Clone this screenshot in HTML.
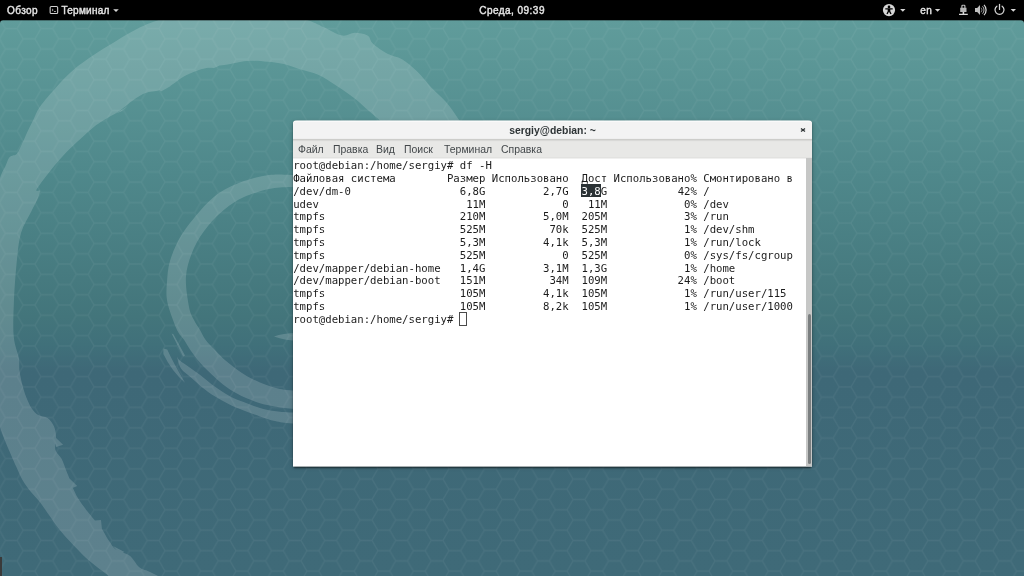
<!DOCTYPE html>
<html lang="ru">
<head>
<meta charset="utf-8">
<title>sergiy@debian: ~</title>
<style>
html,body{margin:0;padding:0;}
body{width:1024px;height:576px;overflow:hidden;position:relative;background:#3f6a79;font-family:"Liberation Sans","DejaVu Sans",sans-serif;}
#bg{position:absolute;left:0;top:0;width:1024px;height:576px;}
#panel{position:absolute;left:0;top:0;width:1024px;height:20px;background:#000;color:#e4e4e4;font-weight:normal;font-size:10px;-webkit-text-stroke:0.42px #e4e4e4;}
#panel span{filter:blur(0.25px);position:absolute;top:0;line-height:22px;white-space:pre;}
#picons{position:absolute;left:0;top:0;width:1024px;height:20px;}
#win{position:absolute;left:293px;top:121px;width:519px;height:345px;background:#fff;border-radius:3px 3px 0 0;box-shadow:0 1px 4px rgba(0,0,0,.3),0 3px 2px -1px rgba(0,0,0,.5),0 0 0 0.5px rgba(0,0,0,.08);}
#win::after{content:"";position:absolute;left:0;top:100%;width:100%;height:1px;background:rgba(255,255,255,.62);}
#chrome{position:absolute;left:0;top:-1px;width:100%;height:39px;border-radius:4px 4px 0 0;background:linear-gradient(to bottom,rgba(255,255,255,.55) 0,rgba(255,255,255,.55) 1px,#fafafa 1px,#fafafa 2px,#f3f3f3 2px,#f3f3f3 18px,#efefef 18px,#efefef 19px,#cdcdca 19px,#cdcdca 20px,#d9d9d7 20px,#d9d9d7 21px,#e6e6e4 21px,#e6e6e4 22px,#e8e8e6 22px,#e8e8e6 37px,#e2e2e0 37px,#e2e2e0 38px,#f0f0ef 38px,#f0f0ef 39px);}
#title{filter:blur(0.25px);position:absolute;left:0;top:0;width:100%;height:18px;text-align:center;font-weight:bold;font-size:10.4px;line-height:19px;color:#2e3436;}
#close{position:absolute;left:505.7px;top:5px;width:8px;height:8px;}
#menu{position:absolute;left:0;top:19px;width:100%;height:18.5px;font-size:10.45px;color:#42474a;}
#menu span{filter:blur(0.3px);position:absolute;top:0;line-height:19px;white-space:pre;}
#term{position:absolute;left:1px;top:37.5px;width:512px;height:308px;color:#1c1c1c;font-family:"DejaVu Sans Mono","Liberation Mono",monospace;font-size:10.667px;}
.ln{filter:blur(0.3px);position:absolute;left:-0.8px;margin-top:1.8px;height:12.8px;line-height:12.8px;white-space:pre;letter-spacing:-0.009px;}
.sel{color:#fff;}
#selbg{position:absolute;left:287.1px;top:25.8px;width:19.7px;height:12.6px;background:#2b3235;filter:blur(0.3px);}
#cursor{position:absolute;left:165px;top:153.6px;width:6px;height:11.8px;border:1px solid #4a4a4a;}
#trough{position:absolute;left:513px;top:37px;width:6px;height:308px;background:#c6c7c6;}
#slider{position:absolute;left:514.6px;top:193.3px;width:3.1px;height:150.2px;background:#7b7f80;border-radius:1.6px;}
</style>
</head>
<body>
<svg id="bg" width="1024" height="576" viewBox="0 0 1024 576">
<defs>
<linearGradient id="g" x1="0" y1="0" x2="0" y2="1">
<stop offset="0.035" stop-color="#609c9b"/>
<stop offset="0.30" stop-color="#4f888b"/>
<stop offset="0.55" stop-color="#43757b"/>
<stop offset="0.60" stop-color="#40707a"/>
<stop offset="0.645" stop-color="#3e6877"/>
<stop offset="1" stop-color="#3f6a78"/>
</linearGradient>
<pattern id="hex" width="35.48" height="20.475" patternUnits="userSpaceOnUse" patternTransform="translate(17.2 18.35)">
<path d="M0 10.2375 L5.913 0 L17.74 0 L23.653 10.2375 L17.74 20.475 L5.913 20.475 Z M23.653 10.2375 L35.48 10.2375" fill="none" stroke="#fff" stroke-opacity="0.052" stroke-width="1.25"/>
</pattern>
</defs>
<rect width="1024" height="576" fill="url(#g)"/>
<rect width="1024" height="576" fill="url(#hex)"/>
<g fill="#fff" opacity="0.155">
<path d="M135.0 598.0 C130.6 594.3 115.0 581.1 108.8 576.0 C102.5 570.9 101.1 570.2 97.3 567.2 C93.5 564.2 89.9 561.5 85.8 557.7 C81.7 553.9 77.0 549.1 72.5 544.3 C68.0 539.5 62.8 533.8 59.0 529.0 C55.2 524.2 52.7 520.2 49.5 515.7 C46.3 511.3 43.1 506.2 40.0 502.3 C36.9 498.4 33.9 495.7 31.0 492.0 C28.1 488.3 25.0 484.2 22.5 480.0 C20.0 475.8 18.3 471.2 16.2 466.6 C14.2 462.0 12.7 459.1 10.0 452.5 C7.3 445.9 4.0 439.1 0.0 427.0 C-4.0 414.9 -10.3 397.8 -14.0 380.0 C-17.7 362.2 -20.7 340.0 -22.0 320.0 C-23.3 300.0 -23.7 277.5 -22.0 260.0 C-20.3 242.5 -15.7 228.7 -12.0 215.0 C-8.3 201.3 -2.9 186.2 0.0 178.0 C2.9 169.8 3.9 169.5 5.5 166.0 C7.1 162.5 7.8 159.0 9.7 157.0 C11.6 155.0 14.6 156.2 16.7 154.0 C18.8 151.8 20.3 147.4 22.2 143.6 C24.1 139.8 26.0 134.9 27.8 131.0 C29.6 127.1 31.3 124.0 33.3 120.0 C35.3 116.0 36.1 112.2 40.0 106.7 C43.9 101.2 51.2 92.8 56.7 86.7 C62.2 80.6 67.2 75.2 73.3 70.0 C79.4 64.8 86.3 60.0 93.3 55.3 C100.2 50.6 108.0 45.9 115.0 41.7 C122.0 37.5 128.1 33.5 135.0 30.0 C141.9 26.5 145.9 24.5 156.7 20.8 C167.5 17.1 182.8 10.8 200.0 8.0 C217.2 5.2 242.1 2.0 260.0 4.0 C277.9 6.0 296.7 16.1 307.3 20.0 C317.9 23.9 317.9 24.7 323.7 27.3 C329.5 29.9 336.8 34.6 342.0 35.5 C347.2 36.4 350.4 32.8 354.7 32.8 C358.9 32.8 364.4 33.7 367.5 35.5 C370.6 37.3 369.7 40.7 373.0 43.7 C376.3 46.7 382.7 51.1 387.5 53.7 C392.3 56.3 397.1 56.3 402.0 59.2 C406.9 62.1 411.8 66.3 416.7 71.0 C421.6 75.7 426.4 82.3 431.3 87.5 C436.2 92.7 441.4 96.7 446.0 102.0 C450.6 107.3 454.4 113.1 458.7 119.4 C463.0 125.7 466.8 130.7 472.0 140.0 C477.2 149.3 484.5 160.0 490.0 175.0 C495.5 190.0 502.5 220.8 505.0 230.0 L470.0 250.0 C465.0 241.7 450.0 215.8 440.0 200.0 C430.0 184.2 418.3 166.5 410.0 155.0 C401.7 143.5 395.1 136.8 390.0 131.0 C384.9 125.2 382.8 123.3 379.3 120.0 C375.9 116.7 373.4 114.8 369.3 111.2 C365.2 107.6 360.2 102.7 354.7 98.4 C349.2 94.2 342.6 89.7 336.5 85.7 C330.4 81.8 324.3 77.5 318.2 74.7 C312.1 72.0 306.2 71.1 300.0 69.2 C293.8 67.3 289.3 64.9 281.0 63.5 C272.7 62.1 258.7 60.7 250.0 60.8 C241.3 60.9 235.4 63.3 229.0 64.3 C222.6 65.3 216.7 66.0 211.5 67.0 C206.3 68.0 202.2 68.8 197.6 70.4 C193.0 72.0 188.1 74.1 183.8 76.5 C179.4 78.9 175.7 82.7 171.6 85.0 C167.5 87.3 163.8 89.0 159.4 90.3 C155.1 91.6 149.8 91.4 145.5 93.0 C141.2 94.6 138.0 96.8 133.4 100.0 C128.8 103.2 122.7 108.7 117.8 112.0 C112.9 115.3 108.6 117.0 104.0 120.0 C99.4 123.0 97.0 124.1 90.0 130.3 C83.0 136.5 70.8 147.4 62.0 157.0 C53.2 166.6 41.2 182.3 37.5 188.0 C33.8 193.7 40.1 189.0 40.0 191.0 C39.9 193.0 38.5 196.5 37.0 200.0 C35.5 203.5 33.7 206.5 31.0 212.0 C28.3 217.5 23.4 224.7 21.0 233.0 C18.6 241.3 17.9 250.2 16.7 262.0 C15.5 273.8 14.2 291.5 13.8 304.0 C13.3 316.5 12.9 328.0 13.8 337.0 C14.6 346.0 17.8 352.3 18.8 358.0 C19.7 363.7 18.8 366.1 19.5 371.0 C20.2 375.9 21.7 382.8 23.0 387.5 C24.3 392.2 25.7 395.9 27.2 399.4 C28.7 402.9 30.1 406.1 31.9 408.8 C33.7 411.4 35.5 413.5 38.1 415.0 C40.7 416.5 44.9 416.2 47.5 418.0 C50.1 419.8 52.3 423.0 53.8 426.0 C55.2 429.0 55.7 432.1 56.0 436.0 C56.3 439.9 54.4 445.6 55.3 449.4 C56.2 453.2 59.8 455.3 61.6 458.8 C63.4 462.2 64.5 466.2 66.0 470.0 C67.5 473.8 69.5 478.5 70.6 481.3 C71.7 484.1 71.2 484.1 72.5 487.0 C73.8 489.9 75.7 494.4 78.2 498.5 C80.7 502.6 84.5 507.7 87.7 511.8 C90.9 515.9 94.9 520.4 97.3 523.3 C99.7 526.2 100.1 526.1 102.0 529.0 C103.9 531.9 106.3 537.0 108.8 540.5 C111.2 544.0 112.9 547.5 116.4 550.0 C119.9 552.5 126.0 552.9 129.8 555.8 C133.6 558.7 135.9 564.5 139.3 567.2 C142.7 569.9 143.6 568.9 150.0 572.0 C156.4 575.1 173.3 583.7 178.0 586.0 Z M54.0 436.0 L63.1 444.7 L56.0 447.0 Z M69.0 478.0 L77.2 486.0 L72.5 488.0 Z M95.0 520.5 L101.0 520.0 L102.0 529.5 Z M113.0 546.0 L124.5 552.0 L120.0 554.0 Z M208.0 67.5 L222.0 64.6 L214.0 68.0 Z M158.0 88.5 L171.6 85.6 L161.0 91.5 Z M116.0 113.5 L127.3 106.5 L121.0 111.5 Z"/>
<path d="M330.0 178.0 C323.7 177.5 302.2 175.5 292.0 175.0 C281.8 174.5 277.0 174.0 269.0 175.0 C261.0 176.0 252.3 178.0 244.0 181.0 C235.7 184.0 226.3 188.0 219.0 193.0 C211.7 198.0 206.3 203.8 200.0 211.0 C193.7 218.2 186.0 227.7 181.0 236.0 C176.0 244.3 172.3 253.3 170.0 261.0 C167.7 268.7 167.5 275.5 167.0 282.0 C166.5 288.5 166.0 293.7 167.0 300.0 C168.0 306.3 171.1 314.6 173.0 320.0 C174.9 325.4 176.5 329.2 178.4 332.5 C180.3 335.8 182.1 336.9 184.2 340.0 C186.3 343.1 188.2 347.1 191.0 351.0 C193.8 354.9 197.3 359.7 200.8 363.6 C204.3 367.6 208.3 371.2 212.0 374.7 C215.7 378.2 219.1 381.4 223.0 384.4 C226.9 387.4 231.6 390.5 235.5 392.8 C239.4 395.1 242.6 396.6 246.7 398.3 C250.8 400.0 255.3 401.8 260.0 403.2 C264.7 404.6 269.6 405.6 275.0 406.5 C280.4 407.4 283.5 408.1 292.7 408.8 C301.9 409.6 323.8 410.6 330.0 411.0 L330.0 392.0 C323.8 391.8 302.0 391.3 292.7 390.5 C283.4 389.7 279.4 388.8 274.0 387.4 C268.6 386.0 264.1 384.0 260.0 382.4 C255.9 380.8 253.0 379.5 249.4 377.5 C245.8 375.5 242.2 373.3 238.3 370.5 C234.4 367.7 229.7 364.3 225.8 360.8 C221.9 357.3 218.0 353.2 214.7 349.7 C211.3 346.2 208.1 343.3 205.7 340.0 C203.2 336.7 201.9 333.3 200.0 330.0 C198.1 326.7 195.8 323.8 194.0 320.0 C192.2 316.2 190.3 314.3 189.0 307.0 C187.7 299.7 185.2 285.8 186.0 276.0 C186.8 266.2 190.3 256.3 194.0 248.0 C197.7 239.7 202.8 232.5 208.0 226.0 C213.2 219.5 219.0 213.8 225.0 209.0 C231.0 204.2 236.7 200.3 244.0 197.0 C251.3 193.7 261.0 190.7 269.0 189.0 C277.0 187.3 281.8 187.2 292.0 187.0 C302.2 186.8 323.7 187.8 330.0 188.0 Z M177.0 357.0 C177.5 357.6 178.1 359.2 180.0 360.8 C181.9 362.4 184.8 364.0 188.3 366.4 C191.8 368.8 196.4 372.0 200.8 375.4 C205.2 378.8 210.1 383.1 214.7 386.5 C219.3 389.9 225.1 393.4 228.6 395.5 C232.1 397.6 232.5 397.7 235.5 399.0 C238.5 400.3 242.6 401.7 246.7 403.2 C250.8 404.7 255.4 406.7 260.0 408.0 C264.6 409.3 268.6 410.2 274.0 411.0 C279.4 411.8 283.4 412.1 292.7 412.6 C302.0 413.1 323.8 413.8 330.0 414.0 L330.0 425.0 C323.8 424.8 301.9 424.3 292.7 423.6 C283.5 422.9 280.4 422.2 275.0 421.0 C269.6 419.8 265.4 418.2 260.0 416.4 C254.6 414.6 247.7 412.1 242.5 410.0 C237.3 407.9 233.2 406.2 228.6 403.9 C224.0 401.6 219.1 399.0 214.7 396.2 C210.3 393.5 205.9 390.3 202.0 387.2 C198.1 384.1 194.5 380.6 191.0 377.5 C187.5 374.4 183.3 371.9 181.0 368.5 C178.7 365.1 177.7 358.9 177.0 357.0 Z M163.4 348.6 L167.2 349.4 Q173.5 363 185 382.8 Q171.5 371 163.4 354 Z M171.6 333.6 L173.4 334.2 L185 355.4 L183.2 356.6 Z M274 336.5 Q284 332.5 300 333 L300 341 Q285 340.5 274 336.5 Z"/>
</g>
</svg>
<div style="position:absolute;left:0;top:557px;width:2px;height:19px;background:#3a3a3a"></div>
<svg style="position:absolute;left:0;top:20px" width="1024" height="4" viewBox="0 0 1024 4"><rect width="1024" height="1" fill="#000" fill-opacity="0.3"/><path d="M0 0h3.5a3.5 3.5 0 0 0 -3.5 3.5z M1024 0h-3.5a3.5 3.5 0 0 1 3.5 3.5z" fill="#000"/></svg>
<div id="panel">
<span style="left:7px;letter-spacing:0.42px">Обзор</span>
<span style="left:61.5px;letter-spacing:0.25px">Терминал</span>
<span style="left:479.2px;letter-spacing:0.47px">Среда, 09:39</span>
<span style="left:920.3px;letter-spacing:0.45px">en</span>
<svg id="picons" width="1024" height="20" viewBox="0 0 1024 20">
<g fill="#d6d6d6" stroke="none">
<!-- terminal app icon -->
<rect x="50.15" y="6.45" width="7.5" height="7.1" rx="1.1" fill="none" stroke="#d0d0d0" stroke-width="1.1"/>
<path d="M52 8.9l1.2 1.1l-1.2 1.1 M54 11.5h1.9" fill="none" stroke="#c4c4c4" stroke-width="0.85"/>
<!-- dropdown arrows -->
<path d="M113.2 9.3h5.6l-2.8 2.8z"/>
<path d="M900.1 9.1h5.4l-2.7 2.7z"/>
<path d="M934.9 9.1h5.4l-2.7 2.7z"/>
<path d="M1010.6 9.1h5.4l-2.7 2.7z"/>
<!-- accessibility -->
<circle cx="889" cy="10.1" r="6.1"/>
<g fill="#000">
<circle cx="889" cy="6.9" r="1.35"/>
<path d="M885.3 8.3h7.4v1.2h-2.4v1.7l1.3 2.6l-1.25.55l-1.3-2.6h-.1l-1.3 2.6l-1.25-.55l1.3-2.6v-1.7h-2.4z"/>
</g>
<!-- wired network -->
<path d="M961.3 6a1.3 1.3 0 0 1 1.3-1.3h1.6a1.3 1.3 0 0 1 1.3 1.3v1.8h1v4.1h-6.3v-4.1h1.1z M962.5 7.8h1.8v-1.6a.4.4 0 0 0 -.4-.4h-1a.4.4 0 0 0 -.4.4z" fill-rule="evenodd" fill="#b4b4b4"/><path d="M962.6 11.9h1.6v1.9h-1.6z M959 13.7h8.8v1.4h-8.8z"/>
<!-- volume -->
<path d="M975 8h2.2l2.8-2.9v9.8l-2.8-2.9h-2.2z" fill="#bdbdbd"/>
<path d="M981 7.7a3.3 3.3 0 0 1 0 4.6" fill="none" stroke="#909090" stroke-width="0.9"/><path d="M982.5 6.3a5.3 5.3 0 0 1 0 7.4" fill="none" stroke="#b4b4b4" stroke-width="1"/><path d="M984 4.9a7.2 7.2 0 0 1 0 10.2" fill="none" stroke="#d6d6d6" stroke-width="1.25"/>
<!-- power -->
<path d="M996.9 6.2a4.5 4.5 0 1 0 5.2 0" fill="none" stroke="#d6d6d6" stroke-width="1.25" stroke-linecap="round"/>
<path d="M999.5 4.4v5" fill="none" stroke="#d6d6d6" stroke-width="1.25" stroke-linecap="round"/>
</g>
</svg>
</div>
<div id="win">
<div id="chrome"></div>
<div id="title">sergiy@debian: ~<svg id="close" width="8" height="8" viewBox="0 0 8 8"><path d="M2 2.4L6 5.6M6 2.4L2 5.6" stroke="#2e3436" stroke-width="1.3" fill="none"/></svg></div>
<div id="menu">
<span style="left:5px">Файл</span>
<span style="left:40px">Правка</span>
<span style="left:83px">Вид</span>
<span style="left:111px">Поиск</span>
<span style="left:151px">Терминал</span>
<span style="left:208px">Справка</span>
</div>
<div id="term">
<div id="selbg"></div>
<div class="ln" style="top:0.0px">root@debian:/home/sergiy# df -H</div>
<div class="ln" style="top:12.8px">Файловая система        Размер Использовано  Дост Использовано% Cмонтировано в</div>
<div class="ln" style="top:25.6px">/dev/dm-0                 6,8G         2,7G  <span class="sel">3,8</span>G           42% /</div>
<div class="ln" style="top:38.4px">udev                       11M            0   11M            0% /dev</div>
<div class="ln" style="top:51.2px">tmpfs                     210M         5,0M  205M            3% /run</div>
<div class="ln" style="top:64.0px">tmpfs                     525M          70k  525M            1% /dev/shm</div>
<div class="ln" style="top:76.8px">tmpfs                     5,3M         4,1k  5,3M            1% /run/lock</div>
<div class="ln" style="top:89.6px">tmpfs                     525M            0  525M            0% /sys/fs/cgroup</div>
<div class="ln" style="top:102.4px">/dev/mapper/debian-home   1,4G         3,1M  1,3G            1% /home</div>
<div class="ln" style="top:115.2px">/dev/mapper/debian-boot   151M          34M  109M           24% /boot</div>
<div class="ln" style="top:128.0px">tmpfs                     105M         4,1k  105M            1% /run/user/115</div>
<div class="ln" style="top:140.8px">tmpfs                     105M         8,2k  105M            1% /run/user/1000</div>
<div class="ln" style="top:153.6px">root@debian:/home/sergiy# </div>
<div id="cursor"></div>
</div>
<div id="trough"></div>
<div id="slider"></div>
</div>
</body>
</html>
